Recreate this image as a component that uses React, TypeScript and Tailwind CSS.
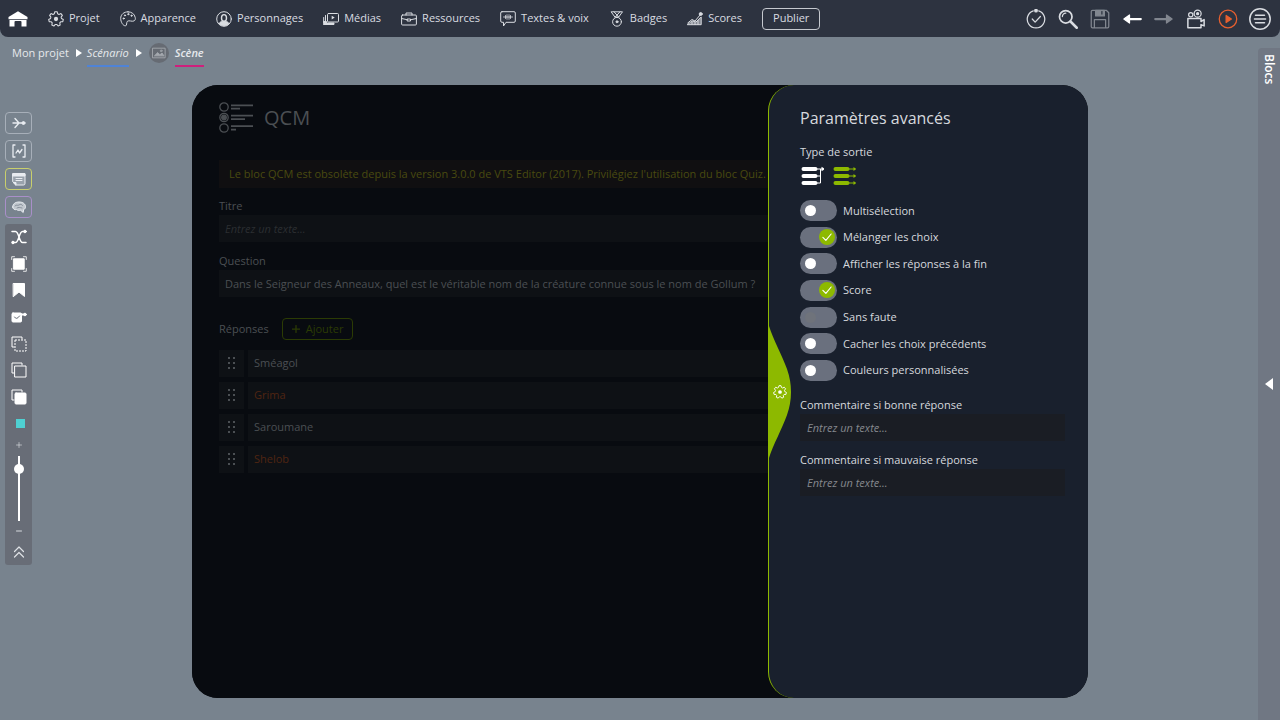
import { useState } from 'react';
import type { ReactNode } from 'react';

interface Toggle {
  id: string;
  label: string;
  on: boolean;
  disabled?: boolean;
}

// Seven-toothed cog outline, centred on 12,12
const polar = (deg: number, r: number) => {
  const a = ((deg - 90) * Math.PI) / 180;
  return `${(12 + r * Math.cos(a)).toFixed(2)} ${(12 + r * Math.sin(a)).toFixed(2)}`;
};

const GEAR = `M${Array.from({ length: 7 }, (_, i) => {
  const c = (i * 360) / 7;
  return [polar(c - 9, 11), polar(c + 9, 11), polar(c + 18, 8.2), polar(c + 33, 8.2)].join('L');
}).join('L')}Z`;

function Gear({ className }: { className?: string }) {
  return (
    <svg className={className} viewBox="0 0 24 24" fill="none" stroke="currentColor" strokeWidth="1.6" strokeLinejoin="round">
      <path d={GEAR} />
      <circle cx="12" cy="12" r="3.2" fill="currentColor" stroke="none" />
    </svg>
  );
}

function Line({ children, className = 'size-4' }: { children: ReactNode; className?: string }) {
  return (
    <svg className={`shrink-0 ${className}`} viewBox="0 0 16 16" fill="none" stroke="currentColor" strokeWidth="1" strokeLinejoin="round" strokeLinecap="round">
      {children}
    </svg>
  );
}

const menu = [
  { label: 'Projet', icon: <Gear className="size-4" /> },
  {
    label: 'Apparence',
    icon: (
      <Line>
        <path d="M8 .8C3.8.8.7 3.5.7 7.5c0 3.5 2.3 7.3 4.6 7.3 2.1 0 .8-3.3 2.1-4.5 1.6-1.4 4.6.7 6.7-.4 1.2-.7 1.5-2.1 1.1-3.5C14.5 3 11.7.8 8 .8z" />
        <circle cx="3.7" cy="7.5" r=".6" fill="currentColor" />
        <circle cx="5" cy="4.4" r=".6" fill="currentColor" />
        <circle cx="8.3" cy="3.2" r=".6" fill="currentColor" />
        <circle cx="11.5" cy="4.7" r=".6" fill="currentColor" />
      </Line>
    ),
  },
  {
    label: 'Personnages',
    icon: (
      <Line>
        <circle cx="8" cy="8" r="7.3" />
        <path d="M5.5 7c0-4.5 5-4.5 5 0 0 4.3-5 4.3-5 0z" strokeWidth="1.4" />
        <path d="M3 12.5c1-1.7 2.5-2 3.5-2h3c1 0 2.5.3 3.5 2-2.5 3-7.5 3-10 0z" fill="currentColor" />
      </Line>
    ),
  },
  {
    label: 'Médias',
    icon: (
      <Line>
        <rect x="4.5" y="2.5" width="11" height="8.5" rx="1" />
        <path d="M8.7 4.8v3.6l3-1.8z" fill="currentColor" stroke="none" />
        <path d="M2.5 4.5v6M.7 6.5v5" />
        <path d="M.7 10.5h2.8V12H11v1.5H.7z" fill="currentColor" />
      </Line>
    ),
  },
  {
    label: 'Ressources',
    icon: (
      <Line>
        <rect x=".6" y="4" width="14.8" height="10" rx="1" />
        <path d="M5 4V2h6v2M.6 7.5l5.9 1.3M15.4 7.5L9.5 8.8M6.5 8h3v2h-3z" />
      </Line>
    ),
  },
  {
    label: 'Textes & voix',
    icon: (
      <Line>
        <path d="M2 .7h12q1.3 0 1.3 1.3v8q0 1.3-1.3 1.3H6L3.5 15v-3.7H2Q.7 11.3.7 10V2Q.7.7 2 .7z" />
        <path d="M3.5 6h9M5.5 4.5v3M7 3.7v4.6M9 3.7v4.6M10.5 4.5v3" strokeWidth=".8" />
      </Line>
    ),
  },
  {
    label: 'Badges',
    icon: (
      <Line>
        <path d="M2.5.8h11L9.7 6H6.3zM5 .8L9.7 6M11 .8L6.3 6" />
        <circle cx="8" cy="10.8" r="4.4" />
        <circle cx="8" cy="10.8" r="1" fill="currentColor" />
      </Line>
    ),
  },
  {
    label: 'Scores',
    icon: (
      <Line>
        <path d="M.7 12L5 8.5 8 10l5.5-6.5" />
        <path d="M.7 13.7h13.5V6L9 11l-3.5-1z" fill="currentColor" fillOpacity=".5" />
        <path d="M5 11v2M8 11.5v2M11 9.5v4" />
        <circle cx="13.7" cy="3" r="1.5" fill="currentColor" />
      </Line>
    ),
  },
];

const tools = [
  {
    label: 'Vérifier',
    icon: (
      <Line className="size-5">
        <path d="M10.2 1.5a7 7 0 1 1-4.4 0" />
        <path d="M5 8l2.3 2.5L11.5 6" />
        <circle cx="8" cy="1.3" r="1" fill="currentColor" />
      </Line>
    ),
  },
  {
    label: 'Rechercher',
    icon: (
      <Line className="size-5">
        <circle cx="6.2" cy="6.2" r="5" strokeWidth="1.4" />
        <path d="M3.5 6a2.7 2.7 0 0 1 2.7-2.7" />
        <path d="M10 10l5 5" strokeWidth="2" />
      </Line>
    ),
  },
  {
    label: 'Enregistrer',
    color: 'text-[#81868f]',
    icon: (
      <Line className="size-5">
        <path d="M2 1h11l2 2v11q0 1-1 1H2q-1 0-1-1V2q0-1 1-1zM3.5 15V8.5h9V15" />
        <path d="M4.5 1h7v4.5h-7z" fill="currentColor" />
        <path d="M9.5 2v2" stroke="#2d3340" />
      </Line>
    ),
  },
  {
    label: 'Annuler',
    color: 'text-white',
    icon: (
      <Line className="size-5">
        <path d="M5 8h10" strokeWidth="1.8" />
        <path d="M1.5 8L6 4.8v6.4z" fill="currentColor" />
      </Line>
    ),
  },
  {
    label: 'Rétablir',
    color: 'text-[#81868f]',
    icon: (
      <Line className="size-5">
        <path d="M1 8h10" strokeWidth="1.8" />
        <path d="M14.5 8L10 4.8v6.4z" fill="currentColor" />
      </Line>
    ),
  },
  {
    label: 'Caméra',
    icon: (
      <Line className="size-5">
        <circle cx="3.8" cy="4.5" r="1.7" />
        <circle cx="9.3" cy="3.7" r="2.8" />
        <circle cx="9.3" cy="3.7" r=".8" fill="currentColor" />
        <path d="M1.5 7.5H12V10l2.5-1.5v5L12 12.5V15H1.5z" strokeWidth="1.2" />
      </Line>
    ),
  },
  {
    label: 'Lecture',
    color: 'text-[#e8602f]',
    icon: (
      <Line className="size-5">
        <circle cx="8" cy="8" r="7" />
        <path d="M6.5 5.2v5.6L10.7 8z" fill="currentColor" />
      </Line>
    ),
  },
  {
    label: 'Menu',
    icon: (
      <Line className="size-6">
        <circle cx="8" cy="8" r="6.8" />
        <path d="M5 5.5h6M4.3 8h7.4M5 10.5h6" />
      </Line>
    ),
  },
];

const sideButtons = [
  {
    label: 'Flux',
    border: 'border-[#a7afb9]',
    icon: (
      <Line>
        <path d="M4 3.5L8 8l-4 4.5M2 8h10" strokeWidth="1.4" />
        <circle cx="12.5" cy="8" r="1.5" fill="currentColor" />
      </Line>
    ),
  },
  {
    label: 'Variables',
    border: 'border-[#a7afb9]',
    icon: (
      <Line>
        <path d="M4 2H2v12h2M12 2h2v12h-2M5 10l2-3 1.5 3L11 6.5" strokeWidth="1.3" />
      </Line>
    ),
  },
  {
    label: 'Notes',
    border: 'border-[#c9cf6c]',
    icon: (
      <Line>
        <path d="M2 3h12v9.5q0 1.5-1.5 1.5h-7L2 11z" fill="currentColor" fillOpacity=".3" />
        <path d="M2 2.5h12V5H2zM2.5 11.5H5V14z" fill="currentColor" />
        <path d="M5 7.5h6M5 9.5h6" />
      </Line>
    ),
  },
  {
    label: 'IA',
    border: 'border-[#a98fc9]',
    icon: (
      <Line>
        <path d="M1.7 8c0-3 2.3-5 6.3-5s6.5 2 6.5 4.7c0 1.5-.7 2.5-1.8 2.7l-.5 3.1-2.5-2.2c-2 .3-3 .2-4-.7-2.2.5-4-.7-4-2.6z" fill="currentColor" fillOpacity=".65" />
        <path d="M4 7c1.5-2 2.5 0 4-1s2.5-1 3.5.5M6 9c1.5-1 3-.5 5 0" stroke="#7b8490" strokeWidth=".8" />
      </Line>
    ),
  },
];

const layerTools = [
  {
    label: 'Liens',
    icon: (
      <Line>
        <path d="M1 2.5h3.5c3.5 0 3.5 11 7 11H15M2 13.5h2.5c3.5 0 3.5-11 7-11H14" strokeWidth="1.5" />
        <circle cx="14" cy="2.5" r="1.3" fill="currentColor" />
        <circle cx="2" cy="13.5" r="1.3" fill="currentColor" />
      </Line>
    ),
  },
  {
    label: 'Cadrer',
    icon: (
      <Line>
        <path d="M.7 3.5V.7h2.8M12.5.7h2.8v2.8M15.3 12.5v2.8h-2.8M3.5 15.3H.7v-2.8" strokeWidth=".8" />
        <rect x="2.8" y="2.8" width="10.4" height="10.4" fill="currentColor" />
      </Line>
    ),
  },
  { label: 'Signet', icon: <Line><path d="M2.5 1.5h11v13L8 10l-5.5 4.5z" fill="currentColor" /></Line> },
  {
    label: 'Bloc',
    icon: (
      <Line>
        <rect x="1" y="4" width="9.5" height="9" rx="1" fill="currentColor" />
        <path d="M10 5.5h3" strokeWidth="2" />
        <path d="M3.5 8q2 3.5 5-1" stroke="#686d77" />
        <circle cx="14" cy="5.5" r="1.3" fill="currentColor" />
      </Line>
    ),
  },
  {
    label: 'Grouper',
    icon: (
      <Line>
        <path d="M3 11H1V1h10v2" />
        <rect x="4" y="4" width="11" height="11" strokeDasharray="2 1" strokeLinecap="butt" />
      </Line>
    ),
  },
  {
    label: 'Copier',
    icon: (
      <Line>
        <path d="M3 11H1V1h10v2" />
        <rect x="4" y="4" width="11" height="11" />
      </Line>
    ),
  },
  {
    label: 'Coller',
    icon: (
      <Line>
        <path d="M3 11H1V1h10v2" />
        <rect x="4" y="4" width="11" height="11" rx="1" fill="currentColor" />
      </Line>
    ),
  },
];

const answers = [
  { text: 'Sméagol', correct: true },
  { text: 'Grima', correct: false },
  { text: 'Saroumane', correct: true },
  { text: 'Shelob', correct: false },
];

const initialToggles: Toggle[] = [
  { id: 'multi', label: 'Multisélection', on: false },
  { id: 'shuffle', label: 'Mélanger les choix', on: true },
  { id: 'show-end', label: 'Afficher les réponses à la fin', on: false },
  { id: 'score', label: 'Score', on: true },
  { id: 'perfect', label: 'Sans faute', on: false, disabled: true },
  { id: 'hide-prev', label: 'Cacher les choix précédents', on: false },
  { id: 'colors', label: 'Couleurs personnalisées', on: false },
];

function TopBar() {
  return (
    <header className="flex h-[37px] items-center justify-between rounded-b-lg bg-[#2d3340] pr-[10px] pl-2 text-[#d9dce1]">
      <nav className="flex items-center gap-5 text-[11px]">
        <a href="#accueil" aria-label="Accueil" className="text-white">
          <svg className="size-5" viewBox="0 0 20 20" fill="currentColor">
            <path d="M10 2.3L19.5 8v2.2H.5V8z" />
            <path d="M1.5 11h17v6.5h-5V13q0-1-1-1h-5q-1 0-1 1v4.5h-5z" />
          </svg>
        </a>
        {menu.map(item => (
          <a key={item.label} href="#menu" className="flex items-center gap-[5px] whitespace-nowrap">
            {item.icon}
            {item.label}
          </a>
        ))}
        <button className="h-[22px] rounded border border-[#c5c9cf] px-[10px]">Publier</button>
      </nav>
      <div className="flex items-center gap-3">
        {tools.map(tool => (
          <button key={tool.label} aria-label={tool.label} className={`flex w-5 justify-center ${tool.color ?? ''}`}>
            {tool.icon}
          </button>
        ))}
      </div>
    </header>
  );
}

function Arrow() {
  return (
    <svg className="h-2 w-[6px] shrink-0 text-white" viewBox="0 0 6 8" fill="currentColor">
      <path d="M0 0l6 4-6 4z" />
    </svg>
  );
}

function Breadcrumb() {
  return (
    <nav className="flex h-8 items-center gap-[7px] pl-3 text-[11px] text-[#e6e9ec]">
      <a href="#projet">Mon projet</a>
      <span className="flex items-center gap-[5px]">
        <Arrow />
        <a href="#scenario" className="border-b-2 border-[#4f83d6] pt-[6px] pb-[3px] italic">Scénario</a>
      </span>
      <Arrow />
      <span className="flex items-center gap-[6px]">
        <span className="flex size-5 items-center justify-center rounded-full bg-[#666b73] text-[#a5a9af]">
          <Line className="size-[14px]">
            <rect x="1" y="2.5" width="14" height="11" />
            <path d="M3 11l3.5-3.5L9 10l2.5-2 2 3z" fill="currentColor" />
            <circle cx="10.5" cy="5.5" r="1" />
          </Line>
        </span>
        <a href="#scene" className="border-b-2 border-[#cf1f7c] pt-[6px] pb-[3px] font-semibold italic">Scène</a>
      </span>
    </nav>
  );
}

function SideBar() {
  return (
    <aside className="flex w-8 flex-col pt-[43px] pl-[5px]">
      <div className="flex w-[27px] flex-col gap-[6px]">
        {sideButtons.map(b => (
          <button key={b.label} aria-label={b.label} className={`flex h-[22px] items-center justify-center rounded border text-[#e8ecf1] ${b.border}`}>
            {b.icon}
          </button>
        ))}
      </div>
      <div className="mt-[6px] flex w-[27px] flex-col items-center rounded-[3px] bg-[#686d77] py-[5px] text-white">
        <div className="flex h-44 flex-col items-center justify-between">
          {layerTools.map(t => (
            <button key={t.label} aria-label={t.label}>{t.icon}</button>
          ))}
        </div>
        <button aria-label="Couleur" className="mt-[14px] ml-1 size-[9px] bg-[#4fd0d2]" />
        <button aria-label="Zoom avant" className="mt-3 text-[#dfe2e6]">
          <Line className="size-[10px]"><path d="M4 8h8M8 4v8" /></Line>
        </button>
        <input
          type="range"
          aria-label="Zoom"
          defaultValue={86}
          className="mt-[6px] mb-[5px] h-[65px] w-4 appearance-none bg-transparent [direction:rtl] [writing-mode:vertical-lr] [&::-webkit-slider-runnable-track]:w-[2px] [&::-webkit-slider-runnable-track]:bg-white [&::-webkit-slider-thumb]:-ml-1 [&::-webkit-slider-thumb]:size-[10px] [&::-webkit-slider-thumb]:appearance-none [&::-webkit-slider-thumb]:rounded-full [&::-webkit-slider-thumb]:bg-white"
        />
        <button aria-label="Zoom arrière" className="text-[#dfe2e6]">
          <Line className="size-[10px]"><path d="M4 8h8" strokeWidth="1.5" /></Line>
        </button>
        <button aria-label="Replier" className="mt-2 text-[#dfe2e6]">
          <Line><path d="M3.5 7.5L8 3l4.5 4.5M3.5 13L8 8.5l4.5 4.5" strokeWidth="1.2" /></Line>
        </button>
      </div>
    </aside>
  );
}

function QuizForm() {
  return (
    <section className="min-w-0 flex-1 bg-[#080b10] pt-4 pl-[27px] text-[11px] text-[#4b4f53]">
      <div className="flex h-[33px] items-center gap-[11px]">
        <svg className="h-[31px] w-[34px]" viewBox="0 0 34 31" fill="none" stroke="currentColor" strokeWidth="1.3">
          <circle cx="5" cy="5" r="4.2" />
          <circle cx="5" cy="15.5" r="4.2" />
          <circle cx="5" cy="15.5" r="2.3" fill="currentColor" />
          <circle cx="5" cy="26" r="4.2" />
          <path d="M12 3.3h22M12 13.7h22M12 24.2h22" strokeWidth="1.8" />
          <path d="M12 6.6h9M12 17.1h14M12 27.6h5" strokeWidth="1.8" />
        </svg>
        <h1 className="text-[20px]">QCM</h1>
      </div>
      <p className="mt-[26px] overflow-hidden bg-[#100f11] py-[6px] pl-[10px] leading-4 whitespace-nowrap text-[#494a10]">
        Le bloc QCM est obsolète depuis la version 3.0.0 de VTS Editor (2017). Privilégiez l'utilisation du bloc Quiz.
      </p>
      <label htmlFor="titre" className="mt-[10px] block leading-4">Titre</label>
      <input id="titre" placeholder="Entrez un texte..." className="mt-px block h-[27px] w-full bg-[#0e1115] px-[6px] italic outline-none placeholder:text-[#2b2e31]" />
      <label htmlFor="question" className="mt-[11px] block leading-4">Question</label>
      <input
        id="question"
        defaultValue="Dans le Seigneur des Anneaux, quel est le véritable nom de la créature connue sous le nom de Gollum ?"
        className="mt-px block h-[27px] w-full bg-[#0e1115] px-[6px] outline-none"
      />
      <div className="mt-[21px] flex items-center gap-[13px]">
        <h2>Réponses</h2>
        <button className="flex h-[22px] items-center gap-[6px] rounded-sm border border-[#2b3b04] px-[9px] text-[#2b3b04]">
          <Line className="size-2"><path d="M8 1v14M1 8h14" strokeWidth="2.5" /></Line>
          Ajouter
        </button>
      </div>
      <ul className="mt-[10px] flex flex-col gap-[5px]">
        {answers.map((a, i) => (
          <li key={a.text} className="flex h-[27px] gap-1">
            <button aria-label={`Déplacer ${a.text}`} className="flex w-[25px] shrink-0 items-center justify-center bg-[#0e1115]">
              <svg className="h-[14px] w-2" viewBox="0 0 8 14" fill="currentColor">
                <path d="M0 0h2v2H0zM5 0h2v2H5zM0 5h2v2H0zM5 5h2v2H5zM0 10h2v2H0zM5 10h2v2H5z" />
              </svg>
            </button>
            <input
              aria-label={`Réponse ${i + 1}`}
              defaultValue={a.text}
              className={`min-w-0 flex-1 bg-[#0e1115] px-[6px] outline-none ${a.correct ? '' : 'text-[#502512]'}`}
            />
          </li>
        ))}
      </ul>
    </section>
  );
}

function Switch({ toggle, onChange }: { toggle: Toggle; onChange: () => void }) {
  return (
    <label className="flex h-[21px] items-center gap-[6px] leading-4">
      <input type="checkbox" checked={toggle.on} disabled={toggle.disabled} onChange={onChange} className="sr-only" />
      <span className={`flex h-[21px] w-[37px] items-center rounded-full bg-[#6a707e] px-[2px] ${toggle.on ? 'justify-end' : 'pl-[5px]'}`}>
        {toggle.on ? (
          <span className="flex size-4 items-center justify-center rounded-full bg-[#8db900] text-white">
            <Line className="size-3"><path d="M2.5 8.5l4 4L13.5 4" strokeWidth="1.5" /></Line>
          </span>
        ) : (
          <span className={`size-[11px] rounded-full ${toggle.disabled ? 'bg-[#6f737b]' : 'bg-white'}`} />
        )}
      </span>
      {toggle.label}
    </label>
  );
}

function SettingsPanel() {
  const [toggles, setToggles] = useState(initialToggles);

  const flip = (id: string) => {
    setToggles(prev => prev.map(t => (t.id === id ? { ...t, on: !t.on } : t)));
  };

  return (
    <section className="relative w-80 shrink-0 rounded-[26px] border-l border-[#8db900] bg-[#19202d] pt-5 pr-[23px] pl-[31px] text-[11px] text-[#d6d9de]">
      {/* Drawer handle */}
      <button aria-label="Fermer les paramètres" className="absolute top-[241px] left-0 h-[132px] w-[23px] text-[#8db900]">
        <svg className="size-full" viewBox="0 0 23 132" fill="currentColor">
          <path d="M0 0C4 13 13 29 18 43q8 23 0 46C13 103 4 119 0 132z" />
        </svg>
        <Gear className="absolute top-[59px] left-1 size-[14px] text-white" />
      </button>

      <h2 className="text-[16px] leading-[26px]">Paramètres avancés</h2>
      <h3 className="mt-[13px] leading-4">Type de sortie</h3>
      <div className="mt-[6px] flex gap-2">
        <button aria-label="Sortie unique" className="text-white">
          <svg className="h-5 w-6" viewBox="0 0 24 20" fill="none" stroke="currentColor">
            <path d="M3.5 3h12M3.5 10h12M3.5 17h12" strokeWidth="4" strokeLinecap="round" />
            <path d="M16 3h6M16 10h4.500M16 17h4.500V3" />
            <path d="M21.500.8L25 3l-3.500 2.200z" fill="currentColor" stroke="none" />
          </svg>
        </button>
        <button aria-label="Sortie par réponse" className="text-[#8db900]">
          <svg className="h-5 w-6" viewBox="0 0 24 20" fill="none" stroke="currentColor">
            <path d="M3.5 3h12M3.5 10h12M3.5 17h12" strokeWidth="4" strokeLinecap="round" />
            <path d="M16 3h6M16 10h6M16 17h6" />
            <path d="M21.5 1l3 2-3 2zM21.5 8l3 2-3 2zM21.5 15l3 2-3 2z" fill="currentColor" stroke="none" />
          </svg>
        </button>
      </div>
      <div className="mt-[14px] flex h-[181px] flex-col justify-between">
        {toggles.map(t => (
          <Switch key={t.id} toggle={t} onChange={() => flip(t.id)} />
        ))}
      </div>
      <label htmlFor="good" className="mt-4 block leading-4">Commentaire si bonne réponse</label>
      <input id="good" placeholder="Entrez un texte..." className="mt-px block h-[27px] w-full bg-[#1a1d24] px-[7px] italic outline-none placeholder:text-[#85888e]" />
      <label htmlFor="bad" className="mt-[11px] block leading-4">Commentaire si mauvaise réponse</label>
      <input id="bad" placeholder="Entrez un texte..." className="mt-px block h-[27px] w-full bg-[#1a1d24] px-[7px] italic outline-none placeholder:text-[#85888e]" />
    </section>
  );
}

export default function App() {
  return (
    <div className="flex min-h-screen flex-col bg-[#78838e] font-['Open_Sans','Noto_Sans',sans-serif]">
      <TopBar />
      <div className="flex flex-1">
        <div className="flex min-w-0 flex-1 flex-col">
          <Breadcrumb />
          <div className="flex flex-1">
            <SideBar />
            <main className="flex min-w-0 flex-1 pt-4 pr-[170px] pb-[22px] pl-40">
              <div className="flex min-w-0 flex-1 overflow-hidden rounded-[26px] bg-[#080b10]">
                <QuizForm />
                <SettingsPanel />
              </div>
            </main>
          </div>
        </div>
        <aside className="mt-[11px] flex w-[22px] shrink-0 flex-col items-center rounded-tl bg-[#707783] text-white">
          <h2 className="pt-[6px] text-[12px] leading-4 font-semibold [writing-mode:vertical-rl]">Blocs</h2>
          <button aria-label="Ouvrir les blocs" className="mt-[294px]">
            <svg className="h-3 w-2" viewBox="0 0 8 12" fill="currentColor">
              <path d="M8 0v12L0 6z" />
            </svg>
          </button>
        </aside>
      </div>
    </div>
  );
}
